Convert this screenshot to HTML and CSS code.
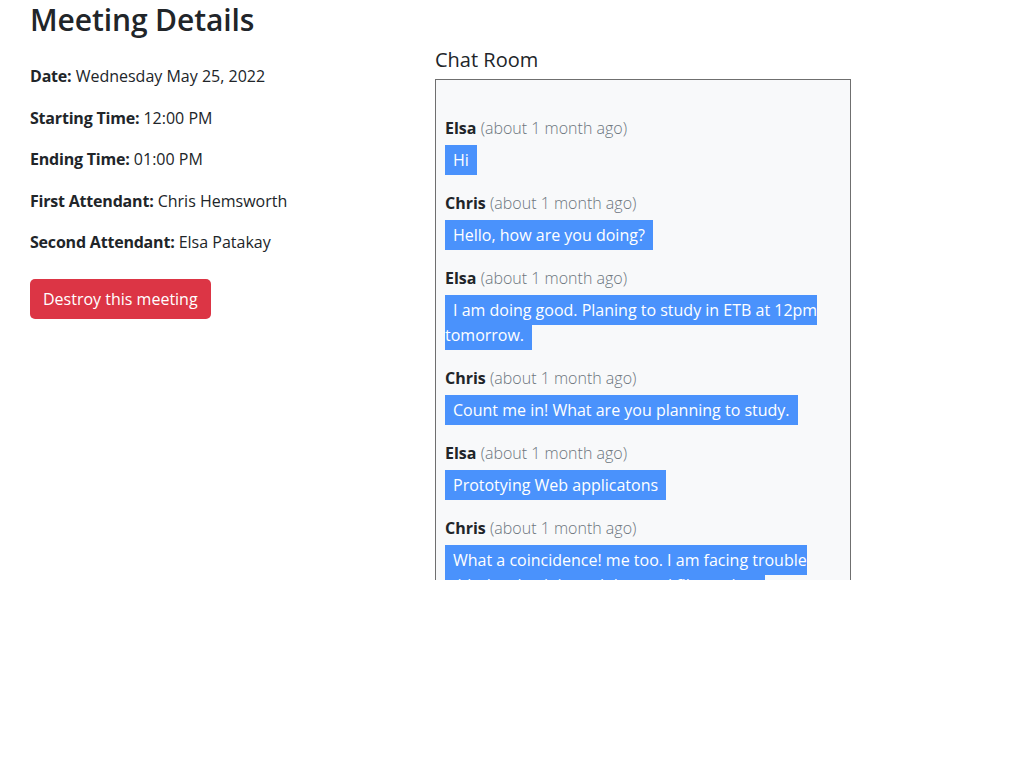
FILE: index.html
```html
<!DOCTYPE html>
<html lang="en">
<head>
<meta charset="utf-8">
<title>Meeting Details</title>
<link rel="stylesheet" href="styles.css">
</head>
<body>
<div class="page">
  <section class="details">
    <h1 class="title">Meeting Details</h1>
    <p class="field"><strong>Date:</strong> Wednesday May 25, 2022</p>
    <p class="field"><strong>Starting Time:</strong> 12:00 PM</p>
    <p class="field"><strong>Ending Time:</strong> 01:00 PM</p>
    <p class="field"><strong>First Attendant:</strong> Chris Hemsworth</p>
    <p class="field"><strong>Second Attendant:</strong> Elsa Patakay</p>
    <button class="btn-danger" type="button">Destroy this meeting</button>
  </section>
  <section class="chat">
    <h2 class="chat-title">Chat Room</h2>
    <div class="chat-clip">
      <div class="chat-box">
        <div class="msg">
          <div class="who"><strong>Elsa</strong> <span class="when">(about 1 month ago)</span></div>
          <div class="text"><span class="bubble">Hi</span></div>
        </div>
        <div class="msg">
          <div class="who"><strong>Chris</strong> <span class="when">(about 1 month ago)</span></div>
          <div class="text"><span class="bubble">Hello, how are you doing?</span></div>
        </div>
        <div class="msg">
          <div class="who"><strong>Elsa</strong> <span class="when">(about 1 month ago)</span></div>
          <div class="text"><span class="bubble">I am doing good. Planing to study in ETB at 12pm tomorrow.</span></div>
        </div>
        <div class="msg">
          <div class="who"><strong>Chris</strong> <span class="when">(about 1 month ago)</span></div>
          <div class="text"><span class="bubble">Count me in! What are you planning to study.</span></div>
        </div>
        <div class="msg">
          <div class="who"><strong>Elsa</strong> <span class="when">(about 1 month ago)</span></div>
          <div class="text"><span class="bubble">Prototying Web applicatons</span></div>
        </div>
        <div class="msg">
          <div class="who"><strong>Chris</strong> <span class="when">(about 1 month ago)</span></div>
          <div class="text"><span class="bubble">What a coincidence! me too. I am facing trouble with the check-in and the seed files today.</span></div>
        </div>
      </div>
    </div>
  </section>
</div>
</body>
</html>
```

FILE: styles.css
```css
* { box-sizing: border-box; }

body {
  margin: 0;
  font-family: "Open Sans", "Noto Sans", sans-serif;
  font-size: 16px;
  line-height: 24px;
  color: #212529;
  background: #fff;
}

.page {
  display: grid;
  grid-template-columns: 405px 416px;
  padding-left: 30px;
  align-items: start;
}

.title {
  margin: 0 0 24px;
  font-size: 30px;
  line-height: 40px;
  font-weight: 600;
  letter-spacing: -0.1px;
}

.field {
  margin: 0 0 17.5px;
}

.field strong {
  font-weight: 700;
  letter-spacing: -0.2px;
}

.btn-danger {
  margin-top: 7px;
  height: 40px;
  padding: 0 13px;
  border: 0;
  border-radius: 5px;
  background: #dc3545;
  color: #fff;
  font-family: inherit;
  font-size: 16px;
  line-height: 24px;
  cursor: pointer;
}

.chat {
  padding-top: 48px;
}

.chat-title {
  margin: 0 0 7px;
  font-size: 20px;
  line-height: 24px;
  font-weight: 500;
}

.chat-clip {
  height: 501px;
  overflow: hidden;
}

.chat-box {
  border: 1px solid #6f6f6f;
  background: #f8f9fa;
  padding: 36px 9px 20px;
}

.msg {
  margin-bottom: 18.5px;
}

.who {
  line-height: 24px;
  margin-bottom: 7.5px;
}

.who strong { font-weight: 700; }

.when {
  color: #6c757d;
  font-weight: 300;
}

.text {
  line-height: 25px;
}

.bubble {
  background: #4a92fc;
  color: #fff;
  padding: 4px 8px;
}
```
